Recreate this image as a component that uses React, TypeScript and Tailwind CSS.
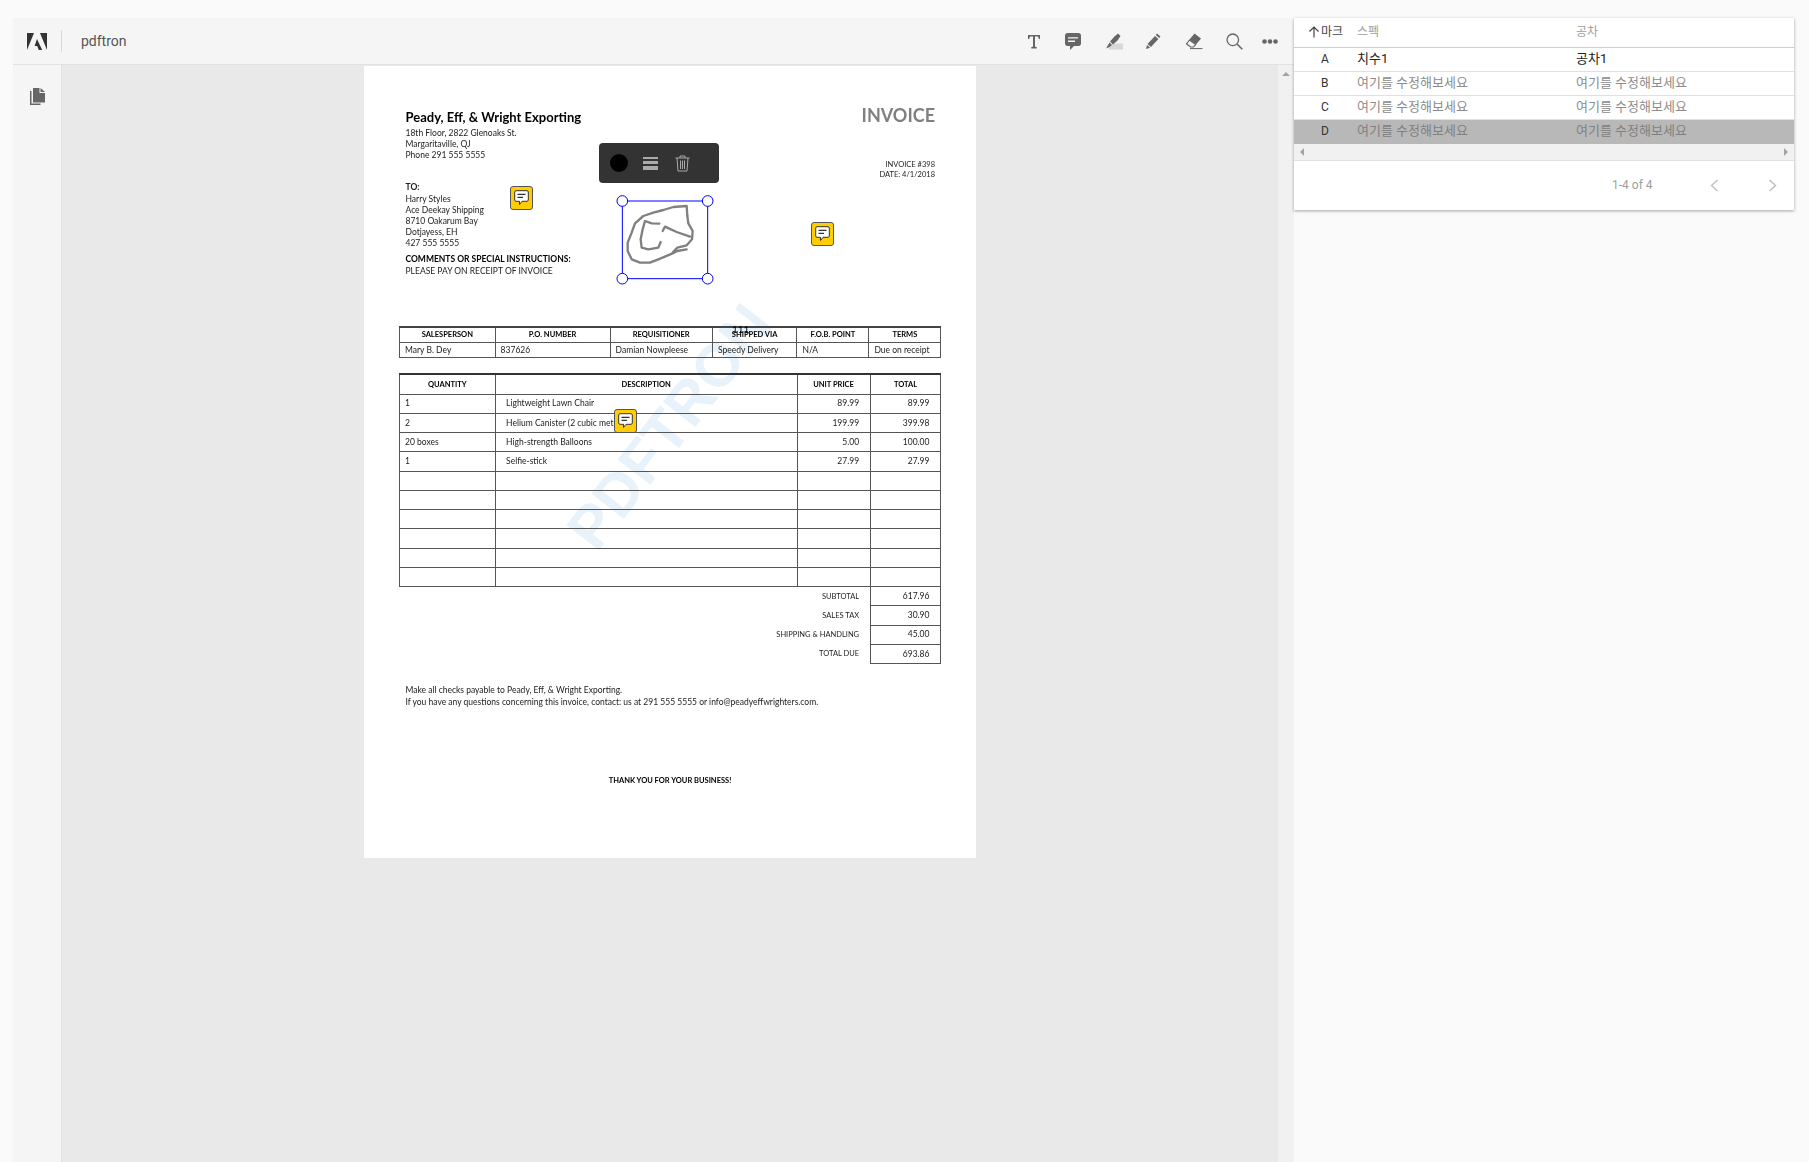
import React from "react";

const cjk = "font-['Roboto','Noto_Sans_CJK_KR',sans-serif]";

const poHead = ["SALESPERSON", "P.O. NUMBER", "REQUISITIONER", "SHIPPED VIA", "F.O.B. POINT", "TERMS"];
const poRow = ["Mary B. Dey", "837626", "Damian Nowpleese", "Speedy Delivery", "N/A", "Due on receipt"];

const items = [
  ["1", "Lightweight Lawn Chair", "89.99", "89.99"],
  ["2", "Helium Canister (2 cubic meters)", "199.99", "399.98"],
  ["20 boxes", "High-strength Balloons", "5.00", "100.00"],
  ["1", "Selfie-stick", "27.99", "27.99"],
  ["", "", "", ""],
  ["", "", "", ""],
  ["", "", "", ""],
  ["", "", "", ""],
  ["", "", "", ""],
  ["", "", "", ""],
];

const totals = [
  ["SUBTOTAL", "617.96"],
  ["SALES TAX", "30.90"],
  ["SHIPPING & HANDLING", "45.00"],
  ["TOTAL DUE", "693.86"],
];

const marks = [
  { mark: "A", spec: "치수1", tol: "공차1", filled: true },
  { mark: "B", spec: "여기를 수정해보세요", tol: "여기를 수정해보세요" },
  { mark: "C", spec: "여기를 수정해보세요", tol: "여기를 수정해보세요" },
  { mark: "D", spec: "여기를 수정해보세요", tol: "여기를 수정해보세요", selected: true },
];

function AdobeLogo() {
  return (
    <svg width="20" height="17" viewBox="0 0 20 17" fill="#333">
      <path d="M0 0H7L0 17Z" />
      <path d="M13 0H20V17Z" />
      <path d="M10 6L15.2 17H11.8L10.2 13H7.6Z" />
    </svg>
  );
}

function ToolIcons() {
  return (
    <div className="flex items-center text-[#666]">
      <svg className="ml-0" width="14" height="15" viewBox="0 0 14 15" fill="#666">
        <path d="M1 1H13V5H11.8L11 2.6H8V12.6L9.8 13.2V14.4H4.2V13.2L6 12.6V2.6H3L2.2 5H1Z" />
      </svg>
      <svg className="ml-[24px]" width="16" height="17" viewBox="0 0 16 17">
        <path d="M2.5 0H13.5C14.9 0 16 1 16 2.4V10.6C16 12 14.9 13 13.5 13H9L5 17V13H2.5C1.1 13 0 12 0 10.6V2.4C0 1 1.1 0 2.5 0Z" fill="#666" />
        <path d="M3 4.2H13V5.6H3ZM3 7.6H10V9H3Z" fill="#f5f5f5" />
      </svg>
      <svg className="ml-[24px]" width="18" height="17" viewBox="0 0 18 17">
        <rect x="4" y="10.5" width="14" height="6" fill="#d8d8d8" />
        <path d="M9.5 3.5L13 0.5L15.5 3L12.5 7.5L8 11.5L5 8.5Z" fill="#666" />
        <path d="M4.5 9.5L7 12L4.5 14L1 15.5L2.8 12.5Z" fill="#666" />
      </svg>
      <svg className="ml-[23px]" width="15" height="16" viewBox="0 0 15 16" fill="#666">
        <path d="M11 0.5L14.5 3.5L13.2 5L9.8 2Z" />
        <path d="M9 3L12.4 6L5 14L1.5 11Z" />
        <path d="M1 12L4.2 14.8L0 16Z" />
      </svg>
      <svg className="ml-[24px]" width="18" height="17" viewBox="0 0 18 17">
        <path d="M9.5 0.5L16 5.5L11 11.5L4.5 6.5Z" fill="#666" />
        <path d="M4.5 7L10.5 11.5L8.5 14H5.5L1.5 10.8Z" fill="#f5f5f5" stroke="#666" strokeWidth="1.2" />
        <path d="M5 15.6H17.5" stroke="#666" strokeWidth="1" />
      </svg>
      <svg className="ml-[23px]" width="17" height="17" viewBox="0 0 17 17" fill="none" stroke="#666">
        <circle cx="6.8" cy="6.8" r="5.8" strokeWidth="1.3" />
        <path d="M11 11L16.3 16.3" strokeWidth="1.6" />
      </svg>
      <svg className="ml-[19px]" width="16" height="5" viewBox="0 0 16 5" fill="#666">
        <circle cx="2.5" cy="2.5" r="2.3" />
        <circle cx="8" cy="2.5" r="2.3" />
        <circle cx="13.5" cy="2.5" r="2.3" />
      </svg>
    </div>
  );
}

function PagesIcon() {
  return (
    <svg width="15" height="17" viewBox="0 0 15 17" fill="#666">
      <path d="M0 3H1.5V15.5H10.5V17H0Z" />
      <path d="M3 0H9.5V5H15V14.5H3Z" />
      <path d="M10.5 0L15 4H10.5Z" />
    </svg>
  );
}

function Sticky({ className }: { className: string }) {
  return (
    <div className={`absolute flex h-[24px] w-[23px] items-center justify-center rounded-[3px] border border-[#555] bg-[#ffcd00] ${className}`}>
      <svg width="15" height="16" viewBox="0 0 15 16">
        <path d="M2 0.7H13C13.7 0.7 14.3 1.3 14.3 2V10C14.3 10.7 13.7 11.3 13 11.3H8L5.5 14.5V11.3H2C1.3 11.3 0.7 10.7 0.7 10V2C0.7 1.3 1.3 0.7 2 0.7Z" fill="#fff" stroke="#333" strokeWidth="1" />
        <path d="M3.5 4.3H11.5M3.5 7.3H9" stroke="#333" strokeWidth="1.2" />
      </svg>
    </div>
  );
}

function Scribble() {
  return (
    <svg className="absolute left-[-7px] top-[-7px]" width="100" height="92" viewBox="75 174 300 276" fill="none">
      <g stroke="#808080" strokeWidth="7" strokeLinecap="round" strokeLinejoin="round">
        <path d="M290 340L262 345L248 352L205 370L180 380L150 380L125 370L113 345L113 320L125 290L135 262L160 240L190 230L220 222L250 213L290 210L292 240L295 262L308 285L306 310L290 328L262 335L248 350" />
        <path d="M208 263L185 262L165 255L158 280L152 310L155 335L175 340L205 335L212 318" />
        <path d="M218 285L225 272L260 288L300 302" />
      </g>
      <g stroke="#0000ff" strokeWidth="3">
        <rect x="97" y="195" width="256" height="233" />
        <circle cx="97" cy="195" r="16" fill="#fff" />
        <circle cx="353" cy="195" r="16" fill="#fff" />
        <circle cx="97" cy="428" r="16" fill="#fff" />
        <circle cx="353" cy="428" r="16" fill="#fff" />
      </g>
    </svg>
  );
}

function InvoicePage() {
  return (
    <div className="relative h-[792px] w-[612px] shrink-0 bg-white">
      <div className="blur-[0.35px] font-['Lato',sans-serif] text-[8.5px] text-[#222]">
        <div className="absolute left-1/2 top-1/2 -translate-x-1/2 -translate-y-1/2 -rotate-[52deg] whitespace-nowrap font-['Liberation_Sans',sans-serif] text-[60px] font-bold leading-none text-[#e8f2fb]">
          PDFTRON
        </div>
        <div className="relative px-[35px] pt-[38px]">
          <div className="flex items-start justify-between pl-[6.5px] pr-[6px]">
            <div className="pt-[6px]">
              <div className="text-[13px] font-bold leading-[15px] text-black">Peady, Eff, &amp; Wright Exporting</div>
              <div className="mt-[3px] leading-[11px]">
                <div>18th Floor, 2822 Glenoaks St.</div>
                <div>Margaritaville, QJ</div>
                <div>Phone 291 555 5555</div>
              </div>
              <div className="mt-[20.5px] font-bold leading-[11px]">TO:</div>
              <div className="mt-[1px] leading-[11px]">
                <div>Harry Styles</div>
                <div>Ace Deekay Shipping</div>
                <div>8710 Oakarum Bay</div>
                <div>Dotjayess, EH</div>
                <div>427 555 5555</div>
              </div>
              <div className="mt-[5px] font-bold leading-[11px] text-black">COMMENTS OR SPECIAL INSTRUCTIONS:</div>
              <div className="mt-[1px] leading-[11px]">PLEASE PAY ON RECEIPT OF INVOICE</div>
            </div>
            <div className="text-right">
              <div className="text-[18px] font-bold leading-[22px] text-[#808080]">INVOICE</div>
              <div className="mt-[33.7px] text-[7.5px] leading-[10.6px]">
                <div>INVOICE #398</div>
                <div>DATE: 4/1/2018</div>
              </div>
            </div>
          </div>

          <table className="mt-[49.5px] w-[541.5px] table-fixed border-collapse border-t-2 border-[#444]">
            <colgroup>
              <col className="w-[95.6px]" />
              <col className="w-[115px]" />
              <col className="w-[102.3px]" />
              <col className="w-[84.5px]" />
              <col className="w-[72px]" />
              <col className="w-[72px]" />
            </colgroup>
            <tbody>
              <tr className="h-[15.5px]">
                {poHead.map((h) => (
                  <td key={h} className="border border-[#555] p-0 text-center text-[7.5px] font-bold leading-none text-black">{h}</td>
                ))}
              </tr>
              <tr className="h-[15px]">
                {poRow.map((c) => (
                  <td key={c} className="border border-[#555] py-0 pl-[5px] pr-0 leading-none">{c}</td>
                ))}
              </tr>
            </tbody>
          </table>

          <table className="mt-[15px] w-[541.5px] table-fixed border-collapse">
            <colgroup>
              <col className="w-[95.6px]" />
              <col className="w-[302px]" />
              <col className="w-[73px]" />
              <col className="w-[70.9px]" />
            </colgroup>
            <tbody>
              <tr className="h-[20px] border-t-2 border-[#333]">
                {["QUANTITY", "DESCRIPTION", "UNIT PRICE", "TOTAL"].map((h) => (
                  <td key={h} className="border border-[#555] p-0 text-center text-[7.5px] font-bold leading-none text-black">{h}</td>
                ))}
              </tr>
              {items.map((row, i) => (
                <tr key={i} className="h-[19.25px]">
                  <td className="border border-[#555] py-0 pl-[5px] pr-0 leading-none">{row[0]}</td>
                  <td className="overflow-hidden whitespace-nowrap border border-[#555] py-0 pl-[10.5px] pr-0 leading-none">{row[1]}</td>
                  <td className="border border-[#555] py-0 pl-0 pr-[10.5px] text-right leading-none">{row[2]}</td>
                  <td className="border border-[#555] py-0 pl-0 pr-[11px] text-right leading-none">{row[3]}</td>
                </tr>
              ))}
              {totals.map(([label, value]) => (
                <tr key={label} className="h-[19.25px]">
                  <td colSpan={3} className="py-0 pl-0 pr-[10.5px] text-right text-[7.5px] leading-none">{label}</td>
                  <td className="border border-[#555] py-0 pl-0 pr-[11px] text-right leading-none">{value}</td>
                </tr>
              ))}
            </tbody>
          </table>

          <div className="mt-[20px] pl-[6.5px] leading-[12px]">
            <div>Make all checks payable to Peady, Eff, &amp; Wright Exporting.</div>
            <div>If you have any questions concerning this invoice, contact: us at 291 555 5555 or info@peadyeffwrighters.com.</div>
          </div>
          <div className="mt-[67.3px] text-center text-[7.5px] font-bold leading-[12px] text-black">THANK YOU FOR YOUR BUSINESS!</div>
        </div>
        <div className="absolute left-[368px] top-[256px] text-[10px] leading-[14px] text-black">111</div>
      </div>

      <Sticky className="left-[146px] top-[120px]" />
      <Sticky className="left-[447px] top-[156px]" />
      <Sticky className="left-[250px] top-[343px]" />

      <div className="absolute left-[235px] top-[77px] flex h-[40px] w-[120px] items-center rounded-[4px] bg-[#333]">
        <div className="ml-[11px] h-[18px] w-[18px] rounded-full bg-black" />
        <div className="ml-[15px] flex w-[15px] flex-col gap-[2px]">
          <div className="h-[2px] bg-[#aaa]" />
          <div className="h-[3px] bg-[#aaa]" />
          <div className="h-[4px] bg-[#aaa]" />
        </div>
        <svg className="ml-[17px]" width="15" height="17" viewBox="0 0 15 17" fill="none" stroke="#aaa">
          <path d="M0.5 3H14.5M5 3V1H10V3M2 3L3 16H12L13 3M5.5 5.5V14M7.5 5.5V14M9.5 5.5V14" strokeWidth="1" />
        </svg>
      </div>

      <div className="absolute left-[258px] top-[135px] h-[78px] w-[86px]">
        <Scribble />
      </div>
    </div>
  );
}

function Viewer() {
  return (
    <div className="flex h-full w-[1281px] flex-col">
      <div className="flex h-[47px] shrink-0 items-center border-b border-[#e2e2e2] bg-[#f5f5f5] pr-[16px]">
        <div className="ml-[14px] flex h-[22px] items-center border-r border-[#d8d8d8] pr-[14px]">
          <AdobeLogo />
        </div>
        <div className="ml-[19px] font-['Roboto',sans-serif] text-[14px] text-[#555]">pdftron</div>
        <div className="ml-auto">
          <ToolIcons />
        </div>
      </div>
      <div className="flex min-h-0 flex-1">
        <div className="flex w-[49px] shrink-0 justify-center border-r border-[#e2e2e2] bg-[#f5f5f5] pt-[23px]">
          <PagesIcon />
        </div>
        <div className="flex min-w-0 flex-1 justify-center bg-[#e9e9e9] pt-px">
          <InvoicePage />
        </div>
        <div className="flex w-[16px] shrink-0 justify-center bg-[#f1f1f1] pt-[7px]">
          <div className="h-0 w-0 border-x-[4px] border-b-[4px] border-x-transparent border-b-[#a3a3a3]" />
        </div>
      </div>
    </div>
  );
}

function MarkTable() {
  return (
    <div className={`w-[500px] self-start bg-white shadow-[0_1px_3px_rgba(0,0,0,0.35)] ${cjk}`}>
      <table className="w-full table-fixed border-collapse text-[13px]">
        <colgroup>
          <col className="w-[57px]" />
          <col className="w-[219px]" />
          <col />
        </colgroup>
        <thead>
          <tr className="h-[29px] border-b border-[#cfcfcf] text-left text-[12px] font-normal">
            <th className="p-0 font-normal text-[#444]">
              <div className="flex items-center pl-[13px]">
                <svg width="14" height="14" viewBox="0 0 14 14" fill="none" stroke="#444" strokeWidth="1.2">
                  <path d="M7 12.5V2M2.5 6.5L7 2L11.5 6.5" />
                </svg>
                <span>마크</span>
              </div>
            </th>
            <th className="py-0 pl-[6px] pr-0 font-normal text-[#9e9e9e]">스펙</th>
            <th className="py-0 pl-[6px] pr-0 font-normal text-[#9e9e9e]">공차</th>
          </tr>
        </thead>
        <tbody>
          {marks.map((m) => (
            <tr key={m.mark} className={`h-[24px] border-b ${m.selected ? "border-[#b8b8b8] bg-[#b8b8b8]" : "border-[#e0e0e0]"}`}>
              <td className="py-0 pl-[27px] pr-0 text-[12px] text-[#333]">{m.mark}</td>
              <td className={`py-0 pl-[6px] pr-0 ${m.filled ? "text-[#222]" : m.selected ? "text-[#808080]" : "text-[#8c8c8c]"}`}>{m.spec}</td>
              <td className={`py-0 pl-[6px] pr-0 ${m.filled ? "text-[#222]" : m.selected ? "text-[#808080]" : "text-[#8c8c8c]"}`}>{m.tol}</td>
            </tr>
          ))}
        </tbody>
      </table>
      <div className="flex h-[17px] items-center justify-between border-b border-[#e0e0e0] bg-[#f1f1f1] px-[6px]">
        <div className="h-0 w-0 border-y-[4px] border-r-[4px] border-y-transparent border-r-[#a3a3a3]" />
        <div className="h-0 w-0 border-y-[4px] border-l-[4px] border-y-transparent border-l-[#a3a3a3]" />
      </div>
      <div className="flex h-[49px] items-center text-[12px] text-[#9e9e9e]">
        <span className="ml-[318px]">1-4 of 4</span>
        <svg className="ml-[57px]" width="9" height="13" viewBox="0 0 9 13" fill="none" stroke="#bdbdbd" strokeWidth="1.4">
          <path d="M7.5 1L1.5 6.5L7.5 12" />
        </svg>
        <svg className="ml-[49px]" width="9" height="13" viewBox="0 0 9 13" fill="none" stroke="#bdbdbd" strokeWidth="1.4">
          <path d="M1.5 1L7.5 6.5L1.5 12" />
        </svg>
      </div>
    </div>
  );
}

export default function App() {
  return (
    <div className="flex h-[1162px] w-[1809px] overflow-hidden bg-[#fafafa] pl-[13px] pt-[18px]">
      <Viewer />
      <MarkTable />
    </div>
  );
}
